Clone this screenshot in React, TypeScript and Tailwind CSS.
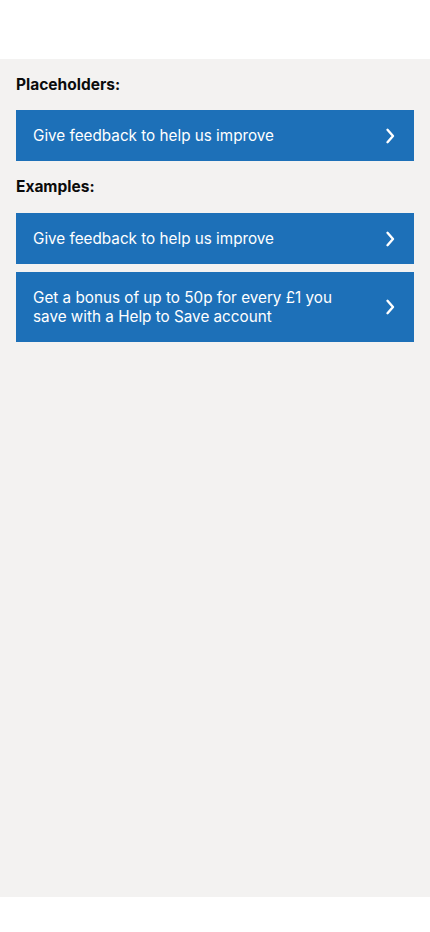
const examples = [
  'Give feedback to help us improve',
  'Get a bonus of up to 50p for every £1 you save with a Help to Save account',
];

function Chevron() {
  return (
    <svg width="10" height="16" viewBox="0 0 10 16" fill="none" className="shrink-0">
      <path d="M2.5 1.8L8 8l-5.5 6.2" stroke="white" strokeWidth="2.4" strokeLinecap="round" strokeLinejoin="round" />
    </svg>
  );
}

function LinkRow({ label }: { label: string }) {
  return (
    <button className="w-full flex items-center justify-between bg-[#1d70b8] py-4 pl-[17px] pr-[19px] text-left">
      <span className="text-white text-[15.25px] leading-[19px] pr-6">{label}</span>
      <Chevron />
    </button>
  );
}

export default function App() {
  return (
    <div className="w-[430px] h-[932px] bg-white flex flex-col" style={{ fontFamily: 'Inter, "Liberation Sans", sans-serif' }}>
      <div className="h-[59px] shrink-0" />
      <main className="flex-1 bg-[#f3f2f1] px-4 pt-4">
        <h2 className="text-[15.5px] leading-5 font-bold text-[#0b0c0c]">Placeholders:</h2>
        <div className="mt-[15px]">
          <LinkRow label="Give feedback to help us improve" />
        </div>
        <h2 className="mt-4 text-[15.5px] leading-5 font-bold text-[#0b0c0c]">Examples:</h2>
        <div className="mt-4 flex flex-col gap-2">
          {examples.map((e) => (
            <LinkRow key={e} label={e} />
          ))}
        </div>
      </main>
      <div className="h-[35px] shrink-0" />
    </div>
  );
}
